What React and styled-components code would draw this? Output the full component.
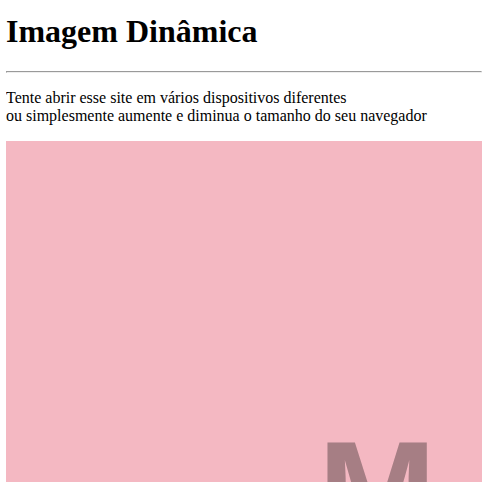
import React from "react";
import styled, { createGlobalStyle } from "styled-components";

const Global = createGlobalStyle`
  html, body { background: #ffffff; }
  body {
    margin: 0 0 0 6px;
    font-family: "Liberation Serif", "Times New Roman", serif;
    color: #000;
    overflow: hidden;
  }
`;

const Page = styled.main`
  display: block;
`;

const Title = styled.h1`
  font-size: 32px;
  font-weight: bold;
  margin: 12.8px 0 21.44px;
`;

const Rule = styled.hr`
  margin: 8px 0;
  border-style: inset;
  border-width: 1px;
  color: gray;
`;

const Text = styled.p`
  font-size: 16px;
  margin: 16px 0;
`;

const Picture = styled.div`
  width: 100%;
  height: 480px;
  background: #f4b8c2;
  display: flex;
  justify-content: flex-start;
  align-items: flex-start;
  padding: 280px 0 0 312px;
  box-sizing: border-box;
  overflow: hidden;
`;

const PictureLabel = styled.span`
  font-family: "Liberation Sans", Arial, sans-serif;
  font-weight: bold;
  font-size: 142px;
  line-height: 1;
  color: #a67e84;
`;

export default function App() {
  return (
    <>
      <Global />
      <Page>
        <Title>Imagem Dinâmica</Title>
        <Rule />
        <Text>
          Tente abrir esse site em vários dispositivos diferentes
          <br />
          ou simplesmente aumente e diminua o tamanho do seu navegador
        </Text>
        <Picture role="img" aria-label="Imagem dinâmica">
          <PictureLabel>M</PictureLabel>
        </Picture>
      </Page>
    </>
  );
}
